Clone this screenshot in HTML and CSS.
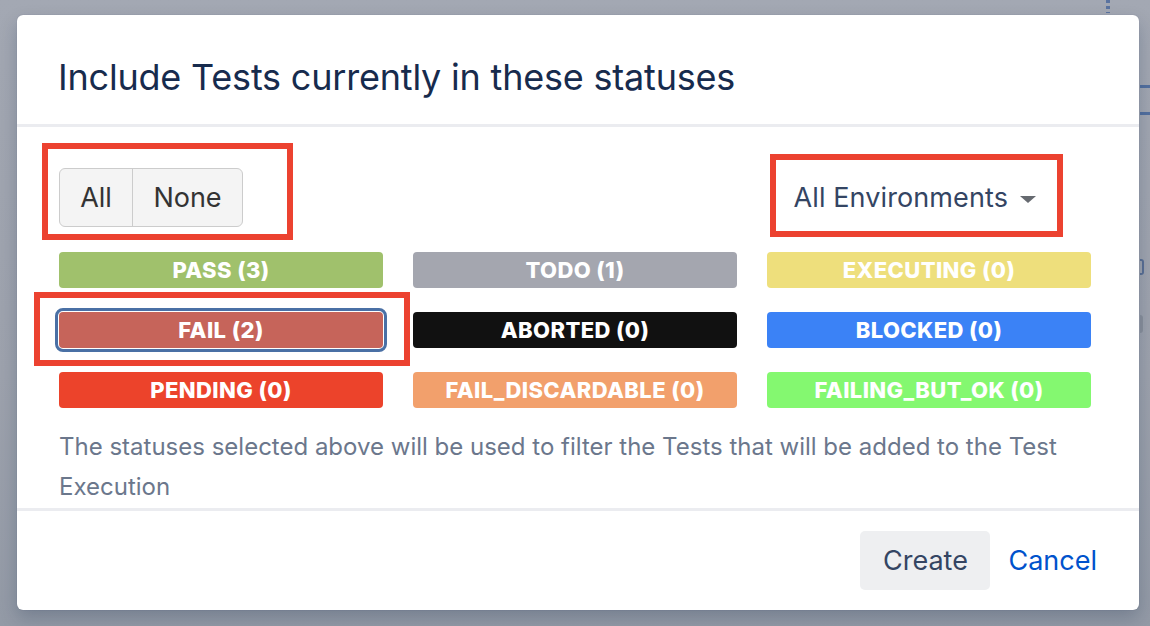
FILE: index.html
```html
<!DOCTYPE html>
<html lang="en">
<head>
<meta charset="utf-8">
<title>Include Tests</title>
<link rel="stylesheet" href="styles.css">
</head>
<body>
<div class="backdrop">
  <div class="bg-dots"></div>
  <div class="bg-line bg-line-1"></div>
  <div class="bg-line bg-line-2"></div>
  <div class="bg-mark bg-mark-1"></div>
  <div class="bg-mark bg-mark-2"></div>

  <div class="modal">
    <header class="modal-header">
      <h1 class="modal-title">Include Tests currently in these statuses</h1>
    </header>
    <section class="modal-body">
      <div class="toolbar">
        <div class="btn-group">
          <button class="seg seg-all">All</button>
          <button class="seg seg-none">None</button>
        </div>
        <button class="env-dropdown">All Environments <span class="caret"></span></button>
      </div>
      <div class="status-grid">
        <button class="status s-pass">PASS (3)</button>
        <button class="status s-todo">TODO (1)</button>
        <button class="status s-executing">EXECUTING (0)</button>
        <button class="status s-fail is-focused">FAIL (2)</button>
        <button class="status s-aborted">ABORTED (0)</button>
        <button class="status s-blocked">BLOCKED (0)</button>
        <button class="status s-pending">PENDING (0)</button>
        <button class="status s-discardable">FAIL_DISCARDABLE (0)</button>
        <button class="status s-failok">FAILING_BUT_OK (0)</button>
      </div>
      <p class="hint">The statuses selected above will be used to filter the Tests that will be added to the Test Execution</p>
    </section>
    <footer class="modal-footer">
      <button class="btn-create">Create</button>
      <button class="btn-cancel">Cancel</button>
    </footer>

    <div class="annot annot-1"></div>
    <div class="annot annot-2"></div>
    <div class="annot annot-3"></div>
  </div>
</div>
</body>
</html>
```

FILE: styles.css
```css
* { box-sizing: border-box; }

html, body {
  margin: 0;
  padding: 0;
  width: 1150px;
  height: 626px;
  overflow: hidden;
}

body {
  font-family: Inter, "Noto Sans", "Liberation Sans", sans-serif;
  background: #9ea3ae;
}

.backdrop {
  position: relative;
  width: 1150px;
  height: 626px;
  padding: 15px 0 0 17px;
  background: linear-gradient(180deg, #a3a8b3 0%, #9da2ad 60%, #939aa6 100%);
}

/* faint page content behind overlay */
.bg-dots {
  position: absolute;
  left: 1106px;
  top: 0;
  width: 4px;
  height: 13px;
  background: repeating-linear-gradient(180deg, #5a73a0 0 3px, transparent 3px 6px);
}
.bg-line {
  position: absolute;
  left: 1140px;
  width: 10px;
  height: 3px;
  background: #53709f;
}
.bg-line-1 { top: 85px; }
.bg-line-2 { top: 112px; }
.bg-mark {
  position: absolute;
  left: 1140px;
  width: 4px;
  border-radius: 0 3px 3px 0;
}
.bg-mark-1 { top: 259px; height: 16px; border: 2px solid #5a6f94; border-left: 0; }
.bg-mark-2 { top: 315px; height: 18px; width: 3px; background: #8a909c; }

.modal {
  position: relative;
  width: 1122px;
  height: 595px;
  background: #ffffff;
  border-radius: 6px;
  box-shadow: 0 8px 18px rgba(9, 30, 66, 0.22), 0 0 1px rgba(9, 30, 66, 0.3);
  display: flex;
  flex-direction: column;
}

.modal-header {
  height: 112px;
  padding: 40px 0 0 41px;
  border-bottom: 3px solid #ebecf0;
}

.modal-title {
  margin: 0;
  font-size: 36px;
  line-height: 44px;
  font-weight: 400;
  color: #172b4d;
  letter-spacing: -0.2px;
}

.modal-body {
  padding: 41px 49px 1px 42px;
  border-bottom: 3px solid #ebecf0;
}

.toolbar {
  display: flex;
  justify-content: space-between;
  align-items: center;
  height: 59px;
}

.btn-group {
  display: flex;
  height: 59px;
  border: 1px solid #cccccc;
  border-radius: 6px;
  background: #f4f4f4;
  overflow: hidden;
}

.seg {
  font-family: inherit;
  font-size: 27px;
  color: #333333;
  background: transparent;
  border: 0;
  padding: 0;
  margin: 0;
}
.seg-all { width: 73px; border-right: 1px solid #cccccc; }
.seg-none { width: 109px; }

.env-dropdown {
  display: flex;
  align-items: center;
  gap: 12px;
  font-family: inherit;
  font-size: 27px;
  letter-spacing: 0.1px;
  color: #344563;
  background: transparent;
  border: 0;
  padding: 0 54px 0 0;
  margin: 0;
}

.caret {
  width: 0;
  height: 0;
  border-left: 8px solid transparent;
  border-right: 8px solid transparent;
  border-top: 7px solid #666a70;
  margin-top: 3px;
}

.status-grid {
  margin-top: 25px;
  display: grid;
  grid-template-columns: repeat(3, 324px);
  grid-auto-rows: 36px;
  column-gap: 30px;
  row-gap: 24px;
}

.status {
  font-family: Inter, "Noto Sans", sans-serif;
  font-weight: 800;
  font-size: 22px;
  color: #ffffff;
  border: 0;
  border-radius: 4px;
  padding: 0;
  margin: 0;
  letter-spacing: 0.4px;
}

.s-pass { background: #a0c16c; }
.s-todo { background: #a4a6af; }
.s-executing { background: #eedf7c; }
.s-fail { background: #c6645a; }
.s-aborted { background: #111111; }
.s-blocked { background: #3b82f6; }
.s-pending { background: #ec432b; }
.s-discardable { background: #f2a06c; }
.s-failok { background: #84f870; }

.is-focused {
  outline: 3px solid #4a70a5;
  outline-offset: 1px;
}

.hint {
  margin: 19px 0 0 0;
  font-size: 24px;
  line-height: 40px;
  color: #6b778c;
}

.modal-footer {
  flex: 1;
  display: flex;
  align-items: center;
  justify-content: flex-end;
  padding: 0 42px 0 0;
  gap: 18px;
}

.btn-create {
  height: 59px;
  width: 130px;
  padding: 0;
  font-family: inherit;
  font-size: 27px;
  color: #344563;
  background: #eeeff1;
  border: 0;
  border-radius: 5px;
  margin: 0;
}

.btn-cancel {
  font-family: inherit;
  font-size: 27px;
  color: #0052cc;
  background: transparent;
  border: 0;
  padding: 0;
  margin: 0;
}

/* red annotation boxes drawn over the screenshot */
.annot {
  position: absolute;
  border: 6px solid #ec4230;
  pointer-events: none;
}
.annot-1 { left: 25px; top: 128px; width: 251px; height: 97px; }
.annot-2 { left: 753px; top: 139px; width: 293px; height: 83px; }
.annot-3 { left: 17px; top: 277px; width: 376px; height: 74px; }
```
